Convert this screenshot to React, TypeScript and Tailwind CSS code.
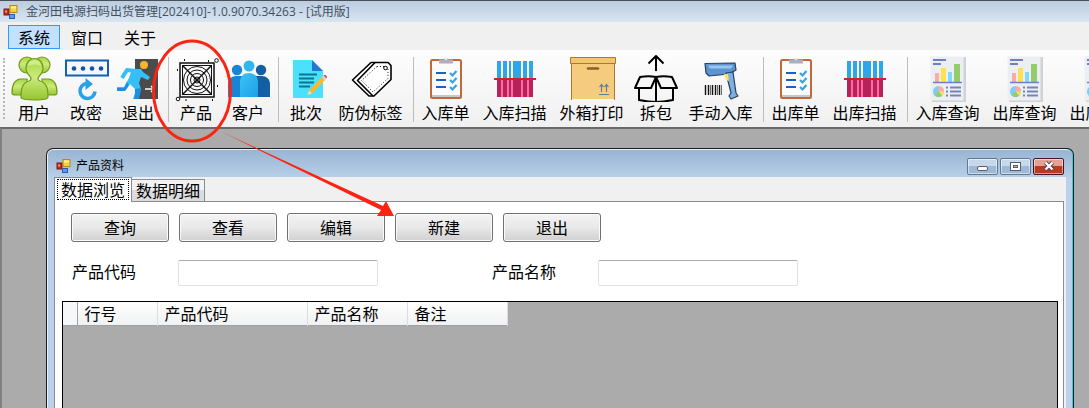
import { useState } from 'react'
import type { ReactNode } from 'react'

const SANS = "font-['Open_Sans','Noto_Sans_CJK_SC',sans-serif]"

function AppIcon() {
  return (
    <svg width="16" height="16" viewBox="0 0 16 16" aria-hidden="true">
      <rect x="1" y="5" width="5" height="6" fill="#c8281a" stroke="#7d1a12" />
      <rect x="7" y="1.5" width="7" height="7" fill="#fbcf3b" stroke="#b98a12" />
      <path d="M8 2.5h5v2H8z" fill="#fff0a8" />
      <rect x="6.5" y="10.5" width="5" height="4" fill="#5b9bf5" stroke="#2a5db4" />
      <rect x="2" y="6.5" width="2" height="2" fill="#f59a8a" />
    </svg>
  )
}

function Icon({ children }: { children: ReactNode }) {
  return (
    <svg width="48" height="48" viewBox="0 0 48 48" fill="none" className="shrink-0" aria-hidden="true">
      {children}
    </svg>
  )
}

function UsersIcon() {
  return (
    <Icon>
      <defs>
        <linearGradient id="green" x1="0" y1="0" x2="0" y2="1">
          <stop offset="0" stopColor="#a6d544" />
          <stop offset=".45" stopColor="#cdea7c" />
          <stop offset="1" stopColor="#94c62f" />
        </linearGradient>
      </defs>
      <g fill="url(#green)" stroke="#6d9c1c" strokeWidth="1.2">
        <circle cx="17" cy="11" r="8" />
        <circle cx="32" cy="11" r="8" />
        <path d="M2 39c0-7 1.500-13 8-14h7v16H6c-2.500 0-4-.6-4-2z" />
        <path d="M47 39c0-7-1.500-13-8-14h-7v16h11c2.500 0 4-.6 4-2z" />
        <path d="M11 43c0-8 1-14 8-16 2-.7 2.500-2 1.500-4-3-3-4.500-5-4.500-9 0-6 4-9.500 8.500-9.500S33 8 33 14c0 4-1.500 6-4.500 9-1 2-.5 3.300 1.500 4 7 2 8 8 8 16 0 2-5 3-13.500 3S11 45 11 43z" />
      </g>
      <path d="M18 12c0-4 3-6 6.500-6S31 8 31 12c-4-2-9-2-13 0z" fill="#dff3a2" opacity=".7" />
    </Icon>
  )
}

function PasswordIcon() {
  return (
    <Icon>
      <rect x="4" y="6.500" width="42" height="15" fill="#f4f6fa" stroke="#0f62b4" strokeWidth="2" />
      {[12, 21, 30, 39].map((x) => (
        <circle key={x} cx={x} cy="14.500" r="2.300" fill="#1252a4" />
      ))}
      <path d="M24.500 29.500A7.500 7.500 0 1 0 33 37.500" stroke="#2b9fe8" strokeWidth="3.500" />
      <path d="M23.500 24l7.500 6-7.500 6z" fill="#2b9fe8" />
    </Icon>
  )
}

function ExitIcon() {
  return (
    <Icon>
      <path d="M21 5h23v40H21z" fill="#4b4b4b" />
      <circle cx="30" cy="11" r="4" fill="#fbb42c" />
      <path d="M22 17l-9-1-5 8" stroke="#35bff8" strokeWidth="4" strokeLinejoin="round" />
      <path d="M18 15h9l2 3 7 5-2 3-7-3-2 6 2 6-3 10h-5l3-9-6-6-4 6H3v-3h7l5-9z" fill="#35bff8" />
      <path d="M15 31l-4 6H3v-3h7l3-6z" fill="#1b8fe3" />
      <path d="M22 35l4-1 1 2-2 9h-5z" fill="#1b8fe3" />
      <path d="M31 35h9m-3-3l3 3-3 3" stroke="#fff" strokeWidth="1.500" />
    </Icon>
  )
}

function FanIcon() {
  return (
    <Icon>
      <g stroke="#111">
        <rect x="8" y="9" width="34" height="34" strokeWidth="1.500" />
        <rect x="10.500" y="11.500" width="29" height="29" />
        <path d="M11 12l28 28M39 12L11 40" strokeWidth="1.500" />
        {[3, 6.500, 10, 13.500].map((r) => (
          <circle key={r} cx="25" cy="26" r={r} />
        ))}
        <circle cx="44.500" cy="6.500" r="1.800" />
        <circle cx="6" cy="45" r="1.800" />
        <path d="M12.500 5v2M36.500 6v2M5.500 15v2M45.500 31v2M40.500 45v2M14 45v2" />
      </g>
      <circle cx="25" cy="26" r="1.500" fill="#111" />
    </Icon>
  )
}

function CustomersIcon() {
  return (
    <Icon>
      <defs>
        <linearGradient id="mid" x1="0" y1="0" x2="1" y2="1">
          <stop offset="0" stopColor="#3cc4f6" />
          <stop offset="1" stopColor="#1f9fe6" />
        </linearGradient>
      </defs>
      <circle cx="13" cy="16" r="5.200" fill="#1784d4" />
      <path d="M4 43V30c0-5 4-8 8-8h6v21z" fill="#1784d4" />
      <circle cx="37" cy="16" r="5.200" fill="#145ea6" />
      <path d="M46 43V30c0-5-4-8-8-8h-6v21z" fill="#145ea6" />
      <circle cx="25" cy="12" r="5.500" fill="#33b6f0" />
      <path d="M16 43V28c0-6 4-9 9-9s9 3 9 9v15z" fill="url(#mid)" />
    </Icon>
  )
}

function BatchIcon() {
  return (
    <Icon>
      <path d="M11 6h19l11 11v27H11z" fill="#4be1fd" />
      <path d="M30 6l11 11H30z" fill="#2676d2" />
      <path d="M17 20.500h18M17 24.500h15M17 28.500h15M17 32.500h11" stroke="#0f7391" strokeWidth="1.800" />
      <path d="M27 36.500L40 23l3 3-13 13.500z" fill="#f9b92a" />
      <path d="M27 36.500l3 3-4.500 1.500z" fill="#f6dcae" />
      <path d="M40 23l1.500-1.500 3 3L43 26z" fill="#cfd8dc" />
      <path d="M41.500 21.500c2-1.500 4.500 1 3 3z" fill="#d9414f" />
    </Icon>
  )
}

function TagIcon() {
  return (
    <Icon>
      <g stroke="#000" strokeWidth="1.600" strokeLinejoin="round">
        <path d="M24 8.500h17l3 3v14L27 42h-5L5.500 26z" fill="#fff" />
        <path d="M28 8.500L10.500 26.500 26 42" />
      </g>
      <path d="M30 12.500h9l2 3v9L26 38 14.500 26.500z" stroke="#000" strokeWidth=".9" strokeDasharray="1 2" />
      <circle cx="38.500" cy="14" r="1.800" fill="#fff" stroke="#000" />
    </Icon>
  )
}

function ClipboardIcon() {
  return (
    <Icon>
      <rect x="9" y="6" width="30" height="38" rx="1.500" fill="#fbfbfb" stroke="#c1693a" strokeWidth="2" />
      <path d="M10 41h28v2H10z" fill="#c7c7c7" />
      <path d="M17 9.500V5.500h4.500a3 3 0 0 1 5 0H31v4z" fill="#a9b2bd" />
      <circle cx="24" cy="5" r="1.200" fill="#e8ebee" />
      {[19, 26, 33].map((y) => (
        <g key={y} transform={`translate(0 ${y})`}>
          <path d="M14 0h10" stroke="#1b62be" strokeWidth="2" />
          <path d="M28 0l2.500 2.500L34.500-2" stroke="#35a2ea" strokeWidth="2.200" />
        </g>
      ))}
    </Icon>
  )
}

function BarcodeIcon() {
  return (
    <Icon>
      <path d="M6 7h4v17H6zM12 7h4v17h-4zM18 7h2v17h-2zM22 7h8v17h-8zM32 7h4v17h-4zM38 7h4v17h-4z" fill="#2ba8ea" />
      <path d="M6 26h36v17H6z" fill="#b8225a" />
      <path d="M10 26h2v17h-2zM16 26h2v17h-2zM20 26h2v17h-2zM30 26h2v17h-2zM36 26h2v17h-2z" fill="#fb6aa2" />
      <path d="M3 24h42v2H3z" fill="#cf2030" />
    </Icon>
  )
}

function BoxIcon() {
  return (
    <Icon>
      <path d="M4 8h42v37H4z" fill="#f5cb7e" />
      <path d="M3.500 9v37M46.500 9v37" stroke="#a9792c" />
      <path d="M2.500 3.500h45v6h-45z" fill="#f3c573" stroke="#a9792c" />
      <path d="M20 14.500h10" stroke="#8a5f2c" strokeWidth="2.500" strokeLinecap="round" />
      <path d="M31 40.500h10M33.500 38v-7M38.500 38v-7M31.500 33l2-2.500 2 2.500M36.500 33l2-2.500 2 2.500" stroke="#5f7f9f" strokeWidth="1.200" />
    </Icon>
  )
}

function UnpackIcon() {
  return (
    <Icon>
      <g stroke="#000" strokeWidth="2" strokeLinejoin="round">
        <path d="M24 17V2M16.500 9.500L24 2l7.500 7.500" />
        <path d="M24 23v25M24 23c-5-1-10-1-16 0L3 34h16zM24 23c5-1 10-1 16 0l5 11H29z" />
        <path d="M7 34v12c5 1 11 2 17 2s12-1 17-2V34" />
      </g>
    </Icon>
  )
}

function ScannerIcon() {
  return (
    <Icon>
      <g stroke="#27415f" strokeWidth="1.200" strokeLinejoin="round">
        <path d="M8 9.500l30-.5 1 7-7 4-20 2-3-3z" fill="#5c93d0" />
        <path d="M29 19l7-1 3 21 2 3-7 3-2-3 2-3z" fill="#7eaee2" />
      </g>
      <path d="M11 11.500h25l-2 3H13z" fill="#9ac3ee" />
      <path d="M27 20l2 6 3 1-1-7z" fill="#f4e26b" />
      <path d="M8.500 31v10M11.500 31v10M15.500 31v10M18.500 31v10M22.500 31v10" stroke="#111" strokeWidth="1.400" />
      <path d="M13.500 31v10M20.500 31v10M24.500 31v10" stroke="#111" strokeWidth=".6" />
    </Icon>
  )
}

function ReportIcon() {
  return (
    <Icon>
      <path d="M8 3h34v45H8z" fill="#d0d3d6" />
      <path d="M6.500 2.500h33v44h-33z" fill="#eceff1" />
      <path d="M9 6h13M9 10h8" stroke="#6d80c0" strokeWidth="2" />
      <path d="M11 19h4v9h-4z" fill="#ffaaa5" />
      <path d="M17 14h5v14h-5z" fill="#ffe14d" />
      <path d="M24 18h4v10h-4z" fill="#7fd8ff" />
      <path d="M30 10h6v18h-6z" fill="#95cc6b" />
      <path d="M9 28.500h29" stroke="#6d80c0" strokeWidth="1.500" />
      <circle cx="14.500" cy="37.500" r="5.500" fill="#7fcdf5" />
      <path d="M14.500 37.500V32a5.500 5.500 0 0 1 5.500 5.500z" fill="#ffaaa5" />
      <path d="M14.500 37.500H20a5.500 5.500 0 0 1-2 4.200z" fill="#ffe14d" />
      <path d="M14.500 37.500l3.500 4.200a5.500 5.500 0 0 1-7.500-.4z" fill="#95cc6b" />
      <path d="M22 33.500h2M26 33.500h11M22 37.500h2M26 37.500h11M22 41.500h2M26 41.500h11" stroke="#7484bc" strokeWidth="2" />
    </Icon>
  )
}

const MENUS = ['系统', '窗口', '关于']

const TOOL_GROUPS = [
  [
    { label: '用户', icon: UsersIcon },
    { label: '改密', icon: PasswordIcon },
    { label: '退出', icon: ExitIcon },
  ],
  [
    { label: '产品', icon: FanIcon },
    { label: '客户', icon: CustomersIcon },
  ],
  [
    { label: '批次', icon: BatchIcon },
    { label: '防伪标签', icon: TagIcon },
  ],
  [
    { label: '入库单', icon: ClipboardIcon },
    { label: '入库扫描', icon: BarcodeIcon },
    { label: '外箱打印', icon: BoxIcon },
    { label: '拆包', icon: UnpackIcon },
    { label: '手动入库', icon: ScannerIcon },
  ],
  [
    { label: '出库单', icon: ClipboardIcon },
    { label: '出库扫描', icon: BarcodeIcon },
  ],
  [
    { label: '入库查询', icon: ReportIcon },
    { label: '出库查询', icon: ReportIcon },
    { label: '出库汇总', icon: ReportIcon },
  ],
]

// toolbar buttons are sized by the number of characters in the label
const TOOL_WIDTH: Record<number, string> = { 2: 'w-[52px]', 3: 'w-[61px]', 4: 'w-[77px]' }

const ACTIONS = ['查询', '查看', '编辑', '新建', '退出']

const COLUMNS = [
  { title: '行号', width: 'w-[80px]' },
  { title: '产品代码', width: 'w-[150px]' },
  { title: '产品名称', width: 'w-[100px]' },
  { title: '备注', width: 'w-[100px]' },
]

function Toolbar() {
  return (
    <div className="flex shrink-0 overflow-hidden bg-linear-to-b from-[#fdfdfd] to-[#f0f0f0] pt-1 pb-1">
      <div className="my-1 mr-[3px] ml-[3px] w-0 shrink-0 border-l-2 border-dotted border-[#b8b8b8]" />
      {TOOL_GROUPS.map((group, i) => (
        <div key={i} className="flex shrink-0">
          {i > 0 && <div className="mt-[3px] mr-px mb-px ml-1 w-px bg-[#bdbdbd]" />}
          {group.map(({ label, icon: ToolIcon }) => (
            <button key={label} className={`flex shrink-0 flex-col items-center ${TOOL_WIDTH[label.length]}`}>
              <ToolIcon />
              <span className="leading-[21px] whitespace-nowrap">{label}</span>
            </button>
          ))}
        </div>
      ))}
    </div>
  )
}

function CaptionButtons() {
  const base = 'flex h-[17px] w-[31px] items-center justify-center rounded-xs border shadow-[inset_0_0_0_1px_rgba(255,255,255,0.5)]'
  const blue = 'border-[#5f7897] bg-linear-to-b from-[#c6d8ea] from-50% to-[#9db9d6] to-50%'
  return (
    <div className="flex gap-[2px]">
      <button aria-label="最小化" className={`${base} ${blue}`}>
        <span className="mt-1 h-[5px] w-[11px] rounded-xs border border-[#555f70] bg-white" />
      </button>
      <button aria-label="最大化" className={`${base} ${blue}`}>
        <span className="flex h-[9px] w-[11px] items-center justify-center border border-[#555f70] bg-white">
          <span className="h-[3px] w-[5px] border border-[#555f70] bg-[#9db9d6]" />
        </span>
      </button>
      <button
        aria-label="关闭"
        className={`${base} border-[#4b1420] bg-linear-to-b from-[#e3a196] from-50% to-[#b93a22] to-50%`}
      >
        <svg width="12" height="10" viewBox="0 0 12 10" fill="none" aria-hidden="true">
          <path d="M2.500 1.500l7 7M9.500 1.500l-7 7" stroke="#5a3a48" strokeWidth="4.200" />
          <path d="M2.500 1.500l7 7M9.500 1.500l-7 7" stroke="#fff" strokeWidth="2.400" />
        </svg>
      </button>
    </div>
  )
}

function Field({ id, label }: { id: string; label: string }) {
  const [value, setValue] = useState('')
  return (
    <div className="flex w-[420px] items-start">
      <label htmlFor={id} className="w-[106px] leading-[22px]">{label}</label>
      <input
        id={id}
        value={value}
        onChange={(e) => setValue(e.target.value)}
        className="h-[26px] w-[200px] rounded-xs border border-[#e2e3ea] border-t-[#abadb3] bg-white px-1 outline-none"
      />
    </div>
  )
}

function ProductWindow() {
  return (
    <section className="mr-[15px] ml-[44px] flex flex-1 flex-col rounded-t-[7px] border border-b-0 border-[#1c1c1c] bg-linear-to-b from-[#98b4d2] to-[#b9d1ea] to-[30px] shadow-[inset_-1px_0_0_#35c8e8,inset_0_1px_0_#e8f2fb,inset_1px_0_0_#e8f2fb]">
      <header className="flex h-[28px] shrink-0 items-center justify-between pt-[6px] pr-[9px] pl-[9px]">
        <div className="flex items-center gap-1">
          <AppIcon />
          <h1 className={`text-[12px] leading-4 text-black ${SANS}`}>产品资料</h1>
        </div>
        <CaptionButtons />
      </header>

      <div className="mr-[7px] ml-[7px] flex flex-1 flex-col bg-[#f0f0f0] pr-[2px]">
        <div role="tablist" className="flex items-end">
          <button
            role="tab"
            aria-selected="true"
            className="relative -mb-px border border-b-0 border-[#8a8c92] bg-white px-[2px] pt-px pb-[2px]"
          >
            <span className="block border border-dotted border-black px-[3px] pb-px leading-[18px]">数据浏览</span>
          </button>
          <button
            role="tab"
            aria-selected="false"
            className="border border-b-0 border-l-0 border-[#8a8c92] bg-linear-to-b from-[#f2f2f2] from-50% to-[#dcdcdc] to-50% px-1 leading-[21px]"
          >
            数据明细
          </button>
        </div>

        <div className="flex flex-1 flex-col border border-b-0 border-[#8a8c92] bg-white pr-[5px] pl-[7px]">
          <div className="mt-[11px] flex gap-[10px] pl-[9px]">
            {ACTIONS.map((a) => (
              <button
                key={a}
                className="h-[29px] w-[98px] rounded-[3px] border border-[#707070] bg-linear-to-b from-[#f4f4f4] via-[#e8e8e8] to-[#d0d0d0] pb-[2px] shadow-[inset_0_0_0_1px_#fbfbfb]"
              >
                {a}
              </button>
            ))}
          </div>

          <div className="mt-[18px] flex pl-[10px]">
            <Field id="code" label="产品代码" />
            <Field id="name" label="产品名称" />
          </div>

          <div className="mt-[15px] flex-1 border border-b-0 border-black bg-[#ababab]">
            <table className="table-fixed border-collapse bg-linear-to-b from-white to-[#f0f1f2]">
              <thead>
                <tr className="h-[23px] border-b border-[#a0a0a0]">
                  <th className="w-[14px] border-r border-[#a0a0a0] bg-[#f6f7f9]" aria-label="行标" />
                  {COLUMNS.map((c) => (
                    <th
                      key={c.title}
                      className={`border-r border-[#dcdde0] p-0 pl-[7px] text-left leading-[22px] font-normal ${c.width}`}
                    >
                      {c.title}
                    </th>
                  ))}
                </tr>
              </thead>
            </table>
          </div>
        </div>
      </div>
    </section>
  )
}

// red circle and arrow leading from the toolbar entry to the "new" button
function Callout() {
  return (
    <svg width="400" height="220" viewBox="0 0 400 220" fill="none" className="pointer-events-none absolute top-0 left-0" aria-hidden="true">
      <ellipse cx="192" cy="91" rx="38.500" ry="50" stroke="#fb2413" strokeWidth="3" />
      <path d="M222 132l161 74 3-5 8 15-17 0 4-6z" fill="#fb2413" />
    </svg>
  )
}

export default function App() {
  return (
    <div className="relative flex h-screen flex-col overflow-hidden bg-[#f0f0f0] font-['Noto_Sans_CJK_SC',sans-serif] text-[16px] text-black">
      <div className="flex h-[22px] shrink-0 items-center gap-[7px] border-t border-[#4a4f57] bg-linear-to-b from-[#bccde0] to-[#d8e5f3] pl-[3px]">
        <AppIcon />
        <span className={`text-[12px] leading-5 text-[#44505f] ${SANS}`}>
          金河田电源扫码出货管理[202410]-1.0.9070.34263 - [试用版]
        </span>
      </div>

      <nav className="flex shrink-0 gap-px pt-[3px] pb-px pl-2">
        {MENUS.map((m, i) => (
          <button
            key={m}
            className={`border px-[9px] leading-[22px] ${i === 0 ? 'border-[#3399ff] bg-[#c2e0ff]' : 'border-transparent'}`}
          >
            {m}
          </button>
        ))}
      </nav>

      <Toolbar />

      <main className="flex flex-1 flex-col border-t-2 border-l-2 border-t-[#696969] border-l-[#808080] bg-[#ababab] pt-[19px]">
        <ProductWindow />
      </main>

      <Callout />
    </div>
  )
}
